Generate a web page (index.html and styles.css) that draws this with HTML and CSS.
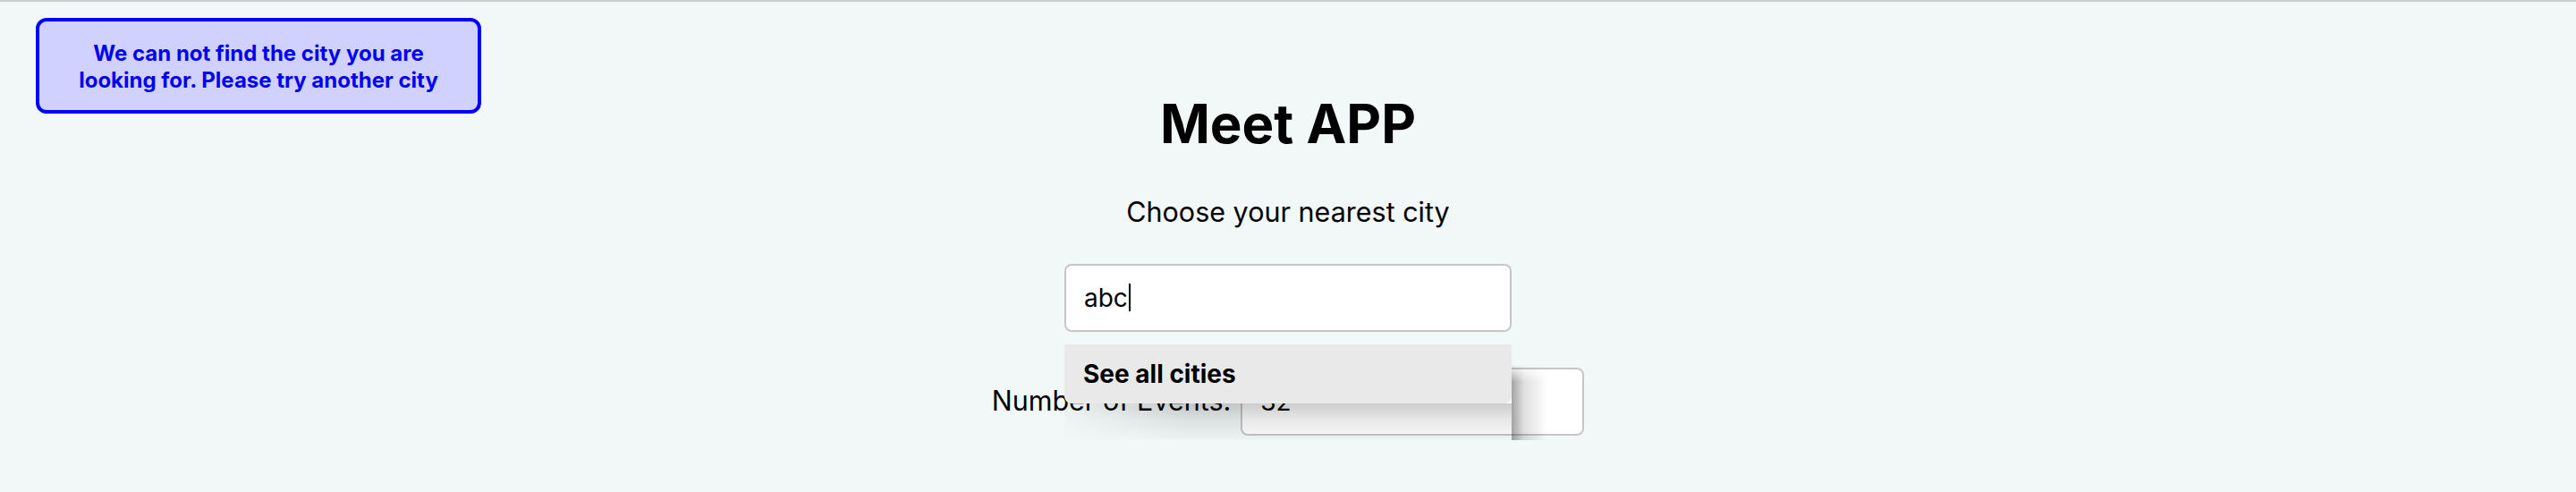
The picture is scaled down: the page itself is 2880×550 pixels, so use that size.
FILE: index.html
```html
<!DOCTYPE html>
<html lang="en">
<head>
<meta charset="utf-8">
<title>Meet APP</title>
<link rel="stylesheet" href="styles.css">
</head>
<body>
<div class="app">
  <div class="alert">We can not find the city you are looking for. Please try another city</div>
  <h1 class="title">Meet APP</h1>
  <div class="city-search">
    <p class="subtitle">Choose your nearest city</p>
    <div class="field">
      <div class="text-input city">abc<span class="caret"></span></div>
      <div class="suggestions">
        <ul class="suggestion-list">
          <li class="suggestion">See all cities</li>
        </ul>
        <div class="shade"></div>
      </div>
    </div>
  </div>
  <div class="number-row">
    <span class="number-label">Number of Events:</span>
    <div class="text-input number">32</div>
  </div>
</div>
</body>
</html>
```
FILE: styles.css
```css
* { box-sizing: border-box; }

html, body {
  margin: 0;
  padding: 0;
}

body {
  background: #f2f7f7;
  border-top: 2px solid #c8cccc;
  font-family: "Inter", "Noto Sans", sans-serif;
  color: #000;
  height: 550px;
  overflow: hidden;
}

.app {
  position: relative;
  text-align: center;
  padding-top: 100px;
}

.alert {
  position: absolute;
  left: 40px;
  top: 18px;
  width: 498px;
  height: 107px;
  padding: 21px 30px 18px;
  border: 4px solid #0000ff;
  border-radius: 12px;
  background: #d1d1ff;
  color: #0000f0;
  font-size: 24px;
  font-weight: 700;
  line-height: 30px;
  text-align: center;
}

.title {
  margin: 0;
  font-size: 60px;
  line-height: 72px;
  font-weight: 700;
}

.city-search {
  display: flex;
  flex-direction: column;
  align-items: center;
}

.subtitle {
  margin: 43px 0 0;
  font-size: 30.5px;
  line-height: 40px;
}

.field {
  position: relative;
  width: 500px;
  margin-top: 38px;
}

.text-input {
  height: 76px;
  padding: 16px 12px 16px 20px;
  border: 2px solid #c6c6c6;
  border-radius: 8px;
  background: #fff;
  font-size: 28px;
  line-height: 40px;
  text-align: left;
}

.city {
  width: 500px;
  margin-bottom: 40px;
}

.caret {
  display: inline-block;
  width: 2px;
  height: 31px;
  margin-left: 1px;
  background: #000;
  vertical-align: -5px;
}

.suggestions {
  position: absolute;
  top: 90px;
  left: 0;
  width: 500px;
  z-index: 2;
}

.suggestions::after {
  content: "";
  position: absolute;
  top: 22px;
  bottom: 0;
  right: -40px;
  width: 40px;
  background: linear-gradient(to right, rgba(0,0,0,0.36), rgba(0,0,0,0.12) 35%, rgba(0,0,0,0) 100%);
  -webkit-mask-image: linear-gradient(to bottom, transparent 0, #000 20px);
  mask-image: linear-gradient(to bottom, transparent 0, #000 20px);
}

.suggestion-list {
  list-style: none;
  margin: 0;
  padding: 0;
}

.suggestion {
  padding: 16px 12px 16px 21px;
  background: #e9e9e9;
  font-size: 28px;
  line-height: 34px;
  font-weight: 700;
  text-align: left;
  border-bottom-left-radius: 8px;
  border-bottom-right-radius: 8px;
}

.shade {
  height: 41px;
  background: linear-gradient(to bottom, rgba(0,0,0,0.2), rgba(0,0,0,0.09) 45%, rgba(0,0,0,0.02) 100%);
  -webkit-mask-image: linear-gradient(to right, rgba(0,0,0,0.15) 0, #000 140px);
  mask-image: linear-gradient(to right, rgba(0,0,0,0.15) 0, #000 140px);
}

.number-row {
  display: flex;
  justify-content: center;
  align-items: baseline;
  gap: 11px;
}

.number-label {
  font-size: 30.5px;
  line-height: 40px;
}

.number {
  width: 384px;
}
```
